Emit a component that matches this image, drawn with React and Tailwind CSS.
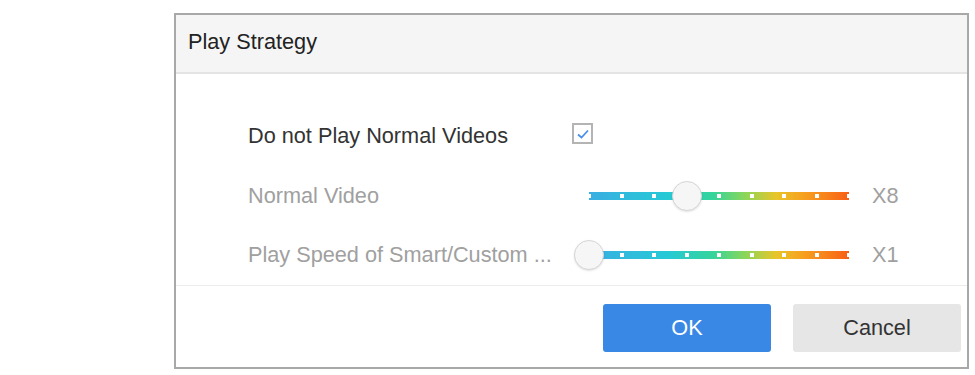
import React from "react";

const font = { fontFamily: '"Liberation Sans", Arial, sans-serif' };

function Slider({ pct }) {
  const dots = [0, 1, 2, 3, 4, 5, 6, 7, 8];
  return (
    <div className="relative w-[290px] h-[32px] flex items-center">
      <div className="relative mx-[15px] h-[8px] flex-1 bg-[linear-gradient(90deg,#3aaee2_0%,#26c9d6_30%,#35d49a_48%,#8bd65a_60%,#e8c52a_72%,#f6a21f_82%,#f7861c_90%,#f85e14_100%)]">
        {dots.map((d) => (
          <div
            key={d}
            className="absolute top-[2px] w-[4px] h-[4px] bg-white"
            style={{ left: `calc(${d * 12.5}% - 2px)` }}
          />
        ))}
      </div>
      <div
        className="absolute top-[1px] w-[30px] h-[30px] rounded-full bg-[#f6f6f6] border border-[#d6d6d6] shadow-[0_1px_2px_rgba(0,0,0,0.12)]"
        style={{ left: `calc(${pct} * 260px)` }}
      />
    </div>
  );
}

export default function App() {
  return (
    <div className="w-[975px] h-[375px] bg-white pl-[174px] pt-[13px]" style={font}>
      <div className="w-[795px] h-[356px] border-2 border-[#a8a8a8] bg-white flex flex-col">
        <div className="h-[59px] bg-[#f5f5f5] border-b-2 border-[#e4e4e4] flex items-center pl-[12px] pb-[2px] text-[21.7px] text-[#222]">
          Play Strategy
        </div>
        <div className="flex flex-col pt-[33px] h-[212px] border-b border-[#ececec]">
          <div className="h-[60px] flex items-center">
            <div className="w-[396px] pl-[72px] text-[21.7px] text-[#333]">Do not Play Normal Videos</div>
            <div className="w-[21px] h-[21px] mb-[6px] border-2 border-[#b4b4b4] flex items-center justify-center">
              <svg width="14" height="12" viewBox="0 0 14 12">
                <path d="M2 6.5 L5.5 9.5 L12 2.5" fill="none" stroke="#4a8fe8" strokeWidth="1.8" />
              </svg>
            </div>
          </div>
          <div className="h-[60px] flex items-center">
            <div className="w-[398px] pl-[72px] text-[21.7px] text-[#a0a0a0]">Normal Video</div>
            <Slider pct={0.375} />
            <div className="ml-[8px] text-[21.7px] text-[#a0a0a0]">X8</div>
          </div>
          <div className="h-[60px] flex items-center">
            <div className="w-[398px] pl-[72px] text-[21.7px] text-[#a0a0a0] whitespace-nowrap">Play Speed of Smart/Custom ...</div>
            <Slider pct={0} />
            <div className="ml-[8px] text-[21.7px] text-[#a0a0a0]">X1</div>
          </div>
        </div>
        <div className="flex-1 flex items-center justify-end pr-[6px] gap-[22px] pt-[3px]">
          <button className="w-[168px] h-[48px] rounded-[3px] bg-[#3a88e6] text-white text-[21.7px]">OK</button>
          <button className="w-[168px] h-[48px] rounded-[3px] bg-[#e6e6e6] text-[#333] text-[21.7px]">Cancel</button>
        </div>
      </div>
    </div>
  );
}
